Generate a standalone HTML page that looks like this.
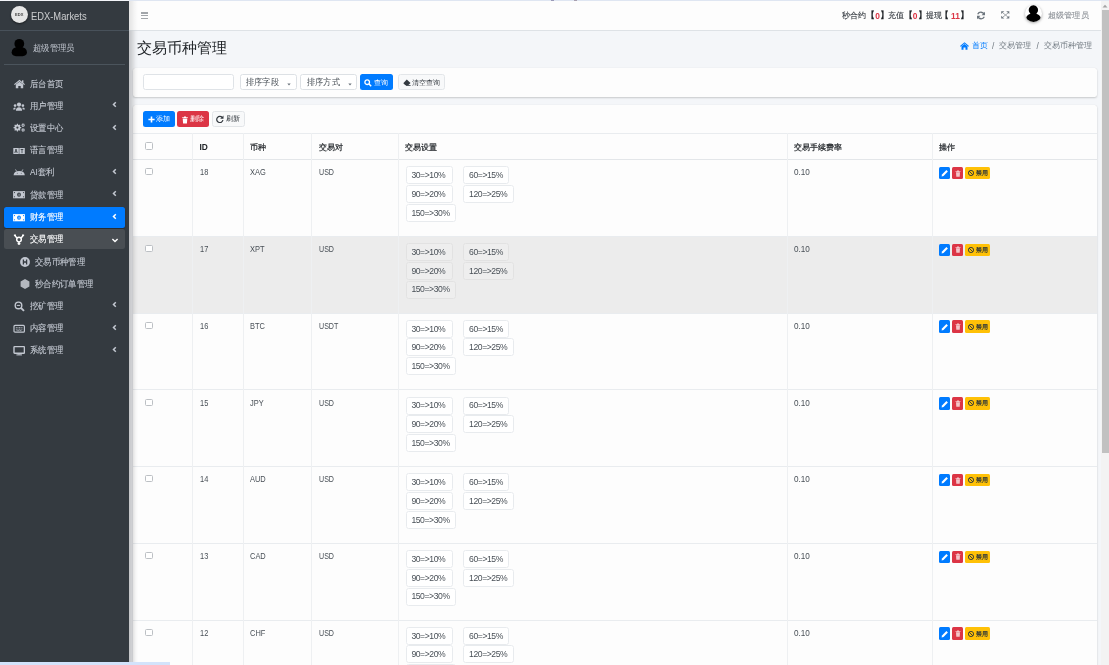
<!DOCTYPE html>
<html><head><meta charset="utf-8">
<style>
*{box-sizing:border-box;margin:0;padding:0}
html,body{width:1109px;height:665px;overflow:hidden}
body{font-family:"Liberation Sans",sans-serif;background:#f4f6f9;color:#212529;position:relative;font-size:8px}
.abs{position:absolute}
.t{position:absolute;white-space:nowrap;line-height:1}
.card{position:absolute;background:#fdfdfd;border-radius:2.5px;box-shadow:0 0 1px rgba(0,0,0,.13),0 1px 2px rgba(0,0,0,.18)}
.hl{position:absolute;height:1px;background:#e9ecef}
.vl{position:absolute;width:1px;background:#eef0f2}
.tag{position:absolute;height:18px;border:1px solid #e8ebee;border-radius:2.5px;background:#fff}
.cb{position:absolute;width:7.2px;height:7.2px;border:1px solid #bcc0c4;border-radius:1.5px;background:#fff}
</style></head><body>

<div id="root" class="abs" style="left:0;top:0;width:1109px;height:665px;will-change:transform">
<div class="abs" style="left:0;top:0;width:1109px;height:1px;background:#dfe6f2"></div>
<div class="abs" style="left:0;top:0;width:129px;height:1px;background:#f3f5f9"></div>
<div class="abs" style="left:551px;top:0;width:3px;height:1px;background:#9a9ab8"></div>
<div class="abs" style="left:574px;top:0;width:3px;height:1px;background:#a8a0b0"></div>
<div class="abs" style="left:129px;top:1px;width:972.4px;height:29.6px;background:#fdfdfd;border-bottom:1px solid #dee2e6"></div>
<div class="abs" style="left:141.2px;top:12.2px;width:7px;height:1.4px;background:#a2a6aa"></div>
<div class="abs" style="left:141.2px;top:14.9px;width:7px;height:1.4px;background:#a2a6aa"></div>
<div class="abs" style="left:141.2px;top:17.6px;width:7px;height:1.4px;background:#a2a6aa"></div>
<div class="t" style="left:842.30px;top:11.30px;font-size:8.4px;color:#343a40;-webkit-text-stroke:0.12px #343a40">秒合约</div>
<div class="t" style="left:866.00px;top:11.20px;font-size:8.6px;color:#212529;-webkit-text-stroke:0.3px #212529">【</div>
<div class="t" style="left:875.20px;top:11.60px;font-size:8.4px;color:#dc3545;font-weight:bold">0</div>
<div class="t" style="left:879.80px;top:11.20px;font-size:8.6px;color:#212529;-webkit-text-stroke:0.3px #212529">】</div>
<div class="t" style="left:903.90px;top:11.20px;font-size:8.6px;color:#212529;-webkit-text-stroke:0.3px #212529">【</div>
<div class="t" style="left:912.70px;top:11.60px;font-size:8.4px;color:#dc3545;font-weight:bold">0</div>
<div class="t" style="left:918.00px;top:11.20px;font-size:8.6px;color:#212529;-webkit-text-stroke:0.3px #212529">】</div>
<div class="t" style="left:940.00px;top:11.20px;font-size:8.6px;color:#212529;-webkit-text-stroke:0.3px #212529">【</div>
<div class="t" style="left:951.00px;top:11.60px;font-size:8.4px;color:#dc3545;font-weight:bold">11</div>
<div class="t" style="left:960.00px;top:11.20px;font-size:8.6px;color:#212529;-webkit-text-stroke:0.3px #212529">】</div>
<div class="t" style="left:888.10px;top:11.30px;font-size:8.4px;color:#343a40;-webkit-text-stroke:0.12px #343a40">充值</div>
<div class="t" style="left:926.00px;top:11.30px;font-size:8.4px;color:#343a40;-webkit-text-stroke:0.12px #343a40">提现</div>
<svg class="abs" style="left:976.0px;top:11.0px" width="10" height="9" viewBox="0 0 10 9"><path d="M8.2 3.7 A3.5 3.5 0 0 0 1.7 3.2" stroke="#6c757d" stroke-width="1.3" fill="none"/><path d="M9 0.7 V4.3 H5.5Z" fill="#6c757d"/><path d="M1.8 5.3 A3.5 3.5 0 0 0 8.3 5.8" stroke="#6c757d" stroke-width="1.3" fill="none"/><path d="M1 8.3 V4.7 H4.5Z" fill="#6c757d"/></svg>
<svg class="abs" style="left:1000.6px;top:11.3px" width="9" height="8" viewBox="0 0 9 8"><path d="M2 2 L7 6 M7 2 L2 6" stroke="#8a9096" stroke-width="0.8"/><path d="M0.2 0.2 H3.3 L0.2 3Z M8.3 0.2 H5.2 L8.3 3Z M0.2 7.6 H3.3 L0.2 4.8Z M8.3 7.6 H5.2 L8.3 4.8Z" fill="#6c757d"/></svg>
<div class="abs" style="left:1025px;top:5.3px;width:17.2px;height:17.2px;border-radius:50%;background:#fff;box-shadow:0 1px 3px rgba(0,0,0,.35);overflow:hidden"><svg width="17.2" height="17.2" viewBox="0 0 17.2 17.2"><circle cx="8.4" cy="5" r="4.7" fill="#000"/><path d="M0.9 14.6 Q1.2 8.6 8.4 8.6 Q15.6 8.6 16 14.6 Q16 17.8 8.4 17.8 Q0.9 17.8 0.9 14.6Z" fill="#000"/></svg></div>
<div class="t" style="left:1047.80px;top:11.10px;font-size:8.4px;color:#8c9197;transform:scaleX(1.02);transform-origin:0 0;-webkit-text-stroke:0.12px #8c9197">超级管理员</div>
<div class="abs" style="left:0;top:1px;width:128.6px;height:664px;background:#343a40"></div>
<div class="abs" style="left:10.8px;top:6.1px;width:17.2px;height:17.2px;border-radius:50%;background:#e6e6e6;box-shadow:0 1px 2px rgba(0,0,0,.5)"></div>
<div class="t" style="left:14.9px;top:13.2px;font-size:4px;color:#444;font-weight:bold;letter-spacing:0.1px">EDX</div>
<div class="t" style="left:31.20px;top:11.50px;font-size:10.4px;color:rgba(255,255,255,.74);transform:scaleX(0.9);transform-origin:0 0;">EDX-Markets</div>
<div class="abs" style="left:0;top:30px;width:128.6px;height:1px;background:#48515a"></div>
<svg class="abs" style="left:11px;top:38px" width="17" height="19" viewBox="0 0 17 19"><circle cx="8.3" cy="5.8" r="4.9" fill="#000"/><path d="M0.6 14.4 Q0.8 9.1 8.3 9.1 Q15.8 9.1 16 14.4 Q16 18.3 8.3 18.3 Q0.6 18.3 0.6 14.4Z" fill="#000"/></svg>
<div class="t" style="left:33.00px;top:43.90px;font-size:8.7px;color:#c2c7d0;transform:scaleX(0.93);transform-origin:0 0;">超级管理员</div>
<div class="abs" style="left:4.2px;top:64px;width:120.4px;height:1px;background:#4b545c"></div>
<svg class="abs" style="left:13.4px;top:78.3px" width="12" height="12" viewBox="0 0 12 12"><path d="M6.5 1.8 L12 6.2 L11.2 7 L6.5 3.3 L1.8 7 L1 6.2 Z" fill="#c2c7d0"/><path d="M2.8 6.6 L6.5 3.7 L10.2 6.6 V10.2 H7.7 V8 H5.3 V10.2 H2.8Z" fill="#c2c7d0"/><rect x="9" y="2.3" width="1.4" height="2.6" fill="#c2c7d0"/></svg>
<div class="t" style="left:29.70px;top:79.50px;font-size:8.8px;color:#c2c7d0;transform:scaleX(0.925);transform-origin:0 0;-webkit-text-stroke:0.12px #c2c7d0">后台首页</div>
<svg class="abs" style="left:13.4px;top:100.52px" width="12" height="12" viewBox="0 0 12 12"><circle cx="6" cy="3.6" r="2.1" fill="#c2c7d0"/><path d="M2.9 9.8 Q2.9 6.3 6 6.3 Q9.1 6.3 9.1 9.8Z" fill="#c2c7d0"/><circle cx="2.1" cy="4.6" r="1.3" fill="#c2c7d0"/><circle cx="9.9" cy="4.6" r="1.3" fill="#c2c7d0"/><path d="M0.1 8.6 Q0.1 6.4 2 6.4 Q2.7 6.4 2.5 7.6 L2.3 8.6Z" fill="#c2c7d0"/><path d="M11.9 8.6 Q11.9 6.4 10 6.4 Q9.3 6.4 9.5 7.6 L9.7 8.6Z" fill="#c2c7d0"/></svg>
<div class="t" style="left:29.70px;top:101.72px;font-size:8.8px;color:#c2c7d0;transform:scaleX(0.925);transform-origin:0 0;-webkit-text-stroke:0.12px #c2c7d0">用户管理</div>
<svg class="abs" style="left:112px;top:101.42px" width="5" height="7" viewBox="0 0 5 7"><path d="M3.8 1.2 L1.5 3.5 L3.8 5.8" stroke="#c2c7d0" stroke-width="1.5" fill="none"/></svg>
<svg class="abs" style="left:13.4px;top:122.74px" width="12" height="12" viewBox="0 0 12 12"><path d="M7.33 3.96 L8.26 4.07 L8.26 5.13 L7.33 5.24 L6.93 6.22 L7.51 6.95 L6.75 7.71 L6.02 7.13 L5.04 7.53 L4.93 8.46 L3.87 8.46 L3.76 7.53 L2.78 7.13 L2.05 7.71 L1.29 6.95 L1.87 6.22 L1.47 5.24 L0.54 5.13 L0.54 4.07 L1.47 3.96 L1.87 2.98 L1.29 2.25 L2.05 1.49 L2.78 2.07 L3.76 1.67 L3.87 0.74 L4.93 0.74 L5.04 1.67 L6.02 2.07 L6.75 1.49 L7.51 2.25 L6.93 2.98Z" fill="#c2c7d0"/><circle cx="4.4" cy="4.6" r="1.1" fill="#343a40"/><path d="M11.44 1.80 L11.97 1.85 L11.97 2.55 L11.44 2.60 L11.12 3.16 L11.33 3.64 L10.73 3.99 L10.43 3.56 L9.77 3.56 L9.47 3.99 L8.87 3.64 L9.08 3.16 L8.76 2.60 L8.23 2.55 L8.23 1.85 L8.76 1.80 L9.08 1.24 L8.87 0.76 L9.47 0.41 L9.77 0.84 L10.43 0.84 L10.73 0.41 L11.33 0.76 L11.12 1.24Z" fill="#c2c7d0"/><circle cx="10.1" cy="2.2" r="0.6" fill="#343a40"/><path d="M11.44 6.60 L11.97 6.65 L11.97 7.35 L11.44 7.40 L11.12 7.96 L11.33 8.44 L10.73 8.79 L10.43 8.36 L9.77 8.36 L9.47 8.79 L8.87 8.44 L9.08 7.96 L8.76 7.40 L8.23 7.35 L8.23 6.65 L8.76 6.60 L9.08 6.04 L8.87 5.56 L9.47 5.21 L9.77 5.64 L10.43 5.64 L10.73 5.21 L11.33 5.56 L11.12 6.04Z" fill="#c2c7d0"/><circle cx="10.1" cy="7" r="0.6" fill="#343a40"/></svg>
<div class="t" style="left:29.70px;top:123.94px;font-size:8.8px;color:#c2c7d0;transform:scaleX(0.925);transform-origin:0 0;-webkit-text-stroke:0.12px #c2c7d0">设置中心</div>
<svg class="abs" style="left:112px;top:123.64px" width="5" height="7" viewBox="0 0 5 7"><path d="M3.8 1.2 L1.5 3.5 L3.8 5.8" stroke="#c2c7d0" stroke-width="1.5" fill="none"/></svg>
<svg class="abs" style="left:13.4px;top:144.96px" width="12" height="12" viewBox="0 0 12 12"><rect x="0.3" y="3" width="5.5" height="6" fill="#c2c7d0"/><rect x="6.3" y="3" width="5.5" height="6" fill="#c2c7d0"/><path d="M1.8 8 L3 4 L4.2 8 M2.3 6.7 H3.7" stroke="#343a40" stroke-width="0.8" fill="none"/><path d="M7.7 4.5 H10.3 M9 4 V8.2" stroke="#343a40" stroke-width="0.8" fill="none"/></svg>
<div class="t" style="left:29.70px;top:146.16px;font-size:8.8px;color:#c2c7d0;transform:scaleX(0.925);transform-origin:0 0;-webkit-text-stroke:0.12px #c2c7d0">语言管理</div>
<svg class="abs" style="left:13.4px;top:167.18px" width="12" height="12" viewBox="0 0 12 12"><path d="M0.6 8.2 Q0.8 3.9 6.2 3.9 Q11.6 3.9 11.8 8.2Z" fill="#c2c7d0"/><path d="M2.5 2.4 L3.6 4.3 M9.9 2.4 L8.8 4.3" stroke="#c2c7d0" stroke-width="0.8"/><circle cx="4.2" cy="6.2" r="0.45" fill="#343a40"/><circle cx="8.2" cy="6.2" r="0.45" fill="#343a40"/></svg>
<div class="t" style="left:29.70px;top:168.38px;font-size:8.8px;color:#c2c7d0;transform:scaleX(0.925);transform-origin:0 0;-webkit-text-stroke:0.12px #c2c7d0">AI套利</div>
<svg class="abs" style="left:112px;top:168.08px" width="5" height="7" viewBox="0 0 5 7"><path d="M3.8 1.2 L1.5 3.5 L3.8 5.8" stroke="#c2c7d0" stroke-width="1.5" fill="none"/></svg>
<svg class="abs" style="left:13.4px;top:189.4px" width="12" height="12" viewBox="0 0 12 12"><rect x="0.1" y="2.1" width="11.8" height="7.2" fill="#c2c7d0"/><ellipse cx="6" cy="5.7" rx="1.9" ry="2.1" fill="#343a40"/><rect x="5.65" y="4.6" width="0.8" height="2.2" fill="#c2c7d0"/><circle cx="1.5" cy="3.6" r="0.55" fill="#343a40"/><circle cx="10.5" cy="3.6" r="0.55" fill="#343a40"/><circle cx="1.5" cy="7.8" r="0.55" fill="#343a40"/><circle cx="10.5" cy="7.8" r="0.55" fill="#343a40"/></svg>
<div class="t" style="left:29.70px;top:190.60px;font-size:8.8px;color:#c2c7d0;transform:scaleX(0.925);transform-origin:0 0;-webkit-text-stroke:0.12px #c2c7d0">贷款管理</div>
<svg class="abs" style="left:112px;top:190.3px" width="5" height="7" viewBox="0 0 5 7"><path d="M3.8 1.2 L1.5 3.5 L3.8 5.8" stroke="#c2c7d0" stroke-width="1.5" fill="none"/></svg>
<div class="abs" style="left:4.2px;top:206.72px;width:120.6px;height:21px;border-radius:2.5px;background:#007bff;box-shadow:0 1px 2px rgba(0,0,0,.3)"></div>
<svg class="abs" style="left:13.4px;top:211.62px" width="12" height="12" viewBox="0 0 12 12"><rect x="0.1" y="2.1" width="11.8" height="7.2" fill="#fff"/><ellipse cx="6" cy="5.7" rx="1.9" ry="2.1" fill="#007bff"/><rect x="5.65" y="4.6" width="0.8" height="2.2" fill="#fff"/><circle cx="1.5" cy="3.6" r="0.55" fill="#007bff"/><circle cx="10.5" cy="3.6" r="0.55" fill="#007bff"/><circle cx="1.5" cy="7.8" r="0.55" fill="#007bff"/><circle cx="10.5" cy="7.8" r="0.55" fill="#007bff"/></svg>
<div class="t" style="left:29.70px;top:212.82px;font-size:8.8px;color:#fff;transform:scaleX(0.925);transform-origin:0 0;-webkit-text-stroke:0.12px #fff">财务管理</div>
<svg class="abs" style="left:112px;top:212.52px" width="5" height="7" viewBox="0 0 5 7"><path d="M3.8 1.2 L1.5 3.5 L3.8 5.8" stroke="#fff" stroke-width="1.5" fill="none"/></svg>
<div class="abs" style="left:4.2px;top:228.94px;width:120.6px;height:20.5px;border-radius:2.5px;background:#494e53"></div>
<svg class="abs" style="left:13.4px;top:233.84px" width="12" height="12" viewBox="0 0 12 12"><path d="M1.6 1.2 L3.9 4 M10.4 1.2 L8.1 4 M0.9 1.2 H3 M9 1.2 H11.1" stroke="#fff" stroke-width="1.4"/><circle cx="6" cy="5.6" r="2.3" fill="none" stroke="#fff" stroke-width="1.5"/><path d="M6 7.8 V11 M4.6 9.6 H7.4" stroke="#fff" stroke-width="1.4"/></svg>
<div class="t" style="left:29.70px;top:235.04px;font-size:8.8px;color:#fff;transform:scaleX(0.925);transform-origin:0 0;-webkit-text-stroke:0.12px #fff">交易管理</div>
<svg class="abs" style="left:110.5px;top:237.64px" width="8" height="5" viewBox="0 0 8 5"><path d="M1.4 1.1 L4 3.6 L6.6 1.1" stroke="#fff" stroke-width="1.4" fill="none"/></svg>
<svg class="abs" style="left:18.9px;top:256.06px" width="12" height="12" viewBox="0 0 12 12"><circle cx="6" cy="6" r="4.9" fill="#c2c7d0"/><path d="M4.4 3.4 V8.6 M7.6 3.4 V8.6 M4.4 6 H7.6" stroke="#343a40" stroke-width="1.3"/></svg>
<div class="t" style="left:34.90px;top:258.06px;font-size:8.8px;color:#c2c7d0;transform:scaleX(0.925);transform-origin:0 0;-webkit-text-stroke:0.12px #c2c7d0">交易币种管理</div>
<svg class="abs" style="left:18.9px;top:278.28px" width="12" height="12" viewBox="0 0 12 12"><path d="M6 1.1 L10.4 3.5 V8.5 L6 10.9 L1.6 8.5 V3.5Z" fill="#b4b8bf"/></svg>
<div class="t" style="left:34.90px;top:280.28px;font-size:8.8px;color:#c2c7d0;transform:scaleX(0.925);transform-origin:0 0;-webkit-text-stroke:0.12px #c2c7d0">秒合约订单管理</div>
<svg class="abs" style="left:13.4px;top:300.5px" width="12" height="12" viewBox="0 0 12 12"><circle cx="5.5" cy="4.4" r="3.3" fill="none" stroke="#c2c7d0" stroke-width="1.4"/><path d="M7.9 6.8 L11 9.9" stroke="#c2c7d0" stroke-width="1.9"/><path d="M3.8 4.4 H7.2" stroke="#c2c7d0" stroke-width="1"/></svg>
<div class="t" style="left:29.70px;top:301.70px;font-size:8.8px;color:#c2c7d0;transform:scaleX(0.925);transform-origin:0 0;-webkit-text-stroke:0.12px #c2c7d0">挖矿管理</div>
<svg class="abs" style="left:112px;top:301.4px" width="5" height="7" viewBox="0 0 5 7"><path d="M3.8 1.2 L1.5 3.5 L3.8 5.8" stroke="#c2c7d0" stroke-width="1.5" fill="none"/></svg>
<svg class="abs" style="left:13.4px;top:322.72px" width="12" height="12" viewBox="0 0 12 12"><rect x="1" y="2.4" width="10.4" height="6.8" rx="1" fill="none" stroke="#c2c7d0" stroke-width="1.2"/><path d="M2.8 4.6 H9.6 M2.8 6.2 H9.6 M3.6 7.6 H8.8" stroke="#c2c7d0" stroke-width="0.8" stroke-dasharray="1.1 0.5"/></svg>
<div class="t" style="left:29.70px;top:323.92px;font-size:8.8px;color:#c2c7d0;transform:scaleX(0.925);transform-origin:0 0;-webkit-text-stroke:0.12px #c2c7d0">内容管理</div>
<svg class="abs" style="left:112px;top:323.62px" width="5" height="7" viewBox="0 0 5 7"><path d="M3.8 1.2 L1.5 3.5 L3.8 5.8" stroke="#c2c7d0" stroke-width="1.5" fill="none"/></svg>
<svg class="abs" style="left:13.4px;top:344.94px" width="12" height="12" viewBox="0 0 12 12"><rect x="1" y="1.6" width="10.4" height="6.6" rx="0.6" fill="none" stroke="#c2c7d0" stroke-width="1.4"/><path d="M5 8.2 L4.7 9.4 H7.7 L7.4 8.2Z" fill="#c2c7d0"/><path d="M3.4 9.9 H9" stroke="#c2c7d0" stroke-width="1"/></svg>
<div class="t" style="left:29.70px;top:346.14px;font-size:8.8px;color:#c2c7d0;transform:scaleX(0.925);transform-origin:0 0;-webkit-text-stroke:0.12px #c2c7d0">系统管理</div>
<svg class="abs" style="left:112px;top:345.84px" width="5" height="7" viewBox="0 0 5 7"><path d="M3.8 1.2 L1.5 3.5 L3.8 5.8" stroke="#c2c7d0" stroke-width="1.5" fill="none"/></svg>
<div class="t" style="left:136.80px;top:40.80px;font-size:14.6px;color:#212529;">交易币种管理</div>
<svg class="abs" style="left:960px;top:42px" width="9" height="8" viewBox="0 0 9 8"><path d="M4.5 0.3 L9 4 L8.3 4.7 L4.5 1.6 L0.7 4.7 L0 4 Z" fill="#007bff"/><path d="M1.5 4.2 L4.5 1.9 L7.5 4.2 V7.8 H5.5 V5.6 H3.5 V7.8 H1.5Z" fill="#007bff"/></svg>
<div class="t" style="left:971.60px;top:41.10px;font-size:8.3px;color:#007bff;">首页</div>
<div class="t" style="left:992.00px;top:41.90px;font-size:8.3px;color:#6c757d;">/</div>
<div class="t" style="left:999.40px;top:41.10px;font-size:8.3px;color:#6c757d;">交易管理</div>
<div class="t" style="left:1036.60px;top:41.90px;font-size:8.3px;color:#6c757d;">/</div>
<div class="t" style="left:1044.00px;top:41.10px;font-size:8.3px;color:#6c757d;">交易币种管理</div>
<div class="card" style="left:133px;top:68.2px;width:963.8px;height:28.5px"></div>
<div class="abs" style="left:143.2px;top:74.4px;width:90.6px;height:15.5px;border:1px solid #dfe3e7;border-radius:2.5px;background:#fff"></div>
<div class="abs" style="left:239.5px;top:74.3px;width:57px;height:15.7px;border:1px solid #dde1e5;border-radius:2.5px;background:#fff"></div>
<div class="t" style="left:246.30px;top:78.30px;font-size:8.5px;color:#495057;transform:scaleX(0.91);transform-origin:0 0;">排序字段</div>
<svg class="abs" style="left:287.4px;top:82.5px" width="5" height="3" viewBox="0 0 5 3"><path d="M0.3 0.4 H3.7 L2 2.4Z" fill="#6c757d"/></svg>
<div class="abs" style="left:300.1px;top:74.3px;width:57px;height:15.7px;border:1px solid #dde1e5;border-radius:2.5px;background:#fff"></div>
<div class="t" style="left:306.60px;top:78.30px;font-size:8.5px;color:#495057;transform:scaleX(0.91);transform-origin:0 0;">排序方式</div>
<svg class="abs" style="left:347.7px;top:82.5px" width="5" height="3" viewBox="0 0 5 3"><path d="M0.3 0.4 H3.7 L2 2.4Z" fill="#6c757d"/></svg>
<div class="abs" style="left:360.1px;top:73.9px;width:32.6px;height:16px;border-radius:2.5px;background:#007bff"></div>
<svg class="abs" style="left:364.4px;top:79.1px" width="8" height="8" viewBox="0 0 8 8"><circle cx="3.2" cy="3.2" r="2.3" fill="none" stroke="#fff" stroke-width="1.3"/><path d="M4.8 4.8 L7.2 7.2" stroke="#fff" stroke-width="1.5"/></svg>
<div class="t" style="left:373.90px;top:78.90px;font-size:7.4px;color:#fff;">查询</div>
<div class="abs" style="left:398.3px;top:74.1px;width:47.1px;height:15.7px;border-radius:2.5px;background:#f8f9fa;border:1px solid #e3e6e9"></div>
<svg class="abs" style="left:402.6px;top:79.4px" width="8" height="7" viewBox="0 0 8 7"><path d="M0.3 4.2 L3.8 0.5 L7.5 4 L5.2 6.3 H2.4Z" fill="#343a40"/><path d="M3 6.5 H7.6" stroke="#343a40" stroke-width="0.8"/></svg>
<div class="t" style="left:412.00px;top:78.90px;font-size:7.3px;color:#343a40;">清空查询</div>
<div class="card" style="left:133px;top:105px;width:963.8px;height:570px"></div>
<div class="abs" style="left:143px;top:111.2px;width:31.9px;height:15.9px;border-radius:2.5px;background:#007bff"></div>
<svg class="abs" style="left:148px;top:115.6px" width="7" height="7" viewBox="0 0 7 7"><path d="M3.5 0.4 V6.6 M0.4 3.5 H6.6" stroke="#fff" stroke-width="1.6"/></svg>
<div class="t" style="left:156.20px;top:115.30px;font-size:7.4px;color:#fff;">添加</div>
<div class="abs" style="left:177.2px;top:111.2px;width:32.3px;height:15.9px;border-radius:2.5px;background:#dc3545"></div>
<svg class="abs" style="left:182.2px;top:115.6px" width="6" height="8" viewBox="0 0 6 8"><path d="M0.2 1.2 H5.8 V2.1 H0.2Z M2 0.5 H4 V1.2 H2Z M0.7 2.4 H5.3 L4.9 7.5 H1.1Z" fill="#fff"/></svg>
<div class="t" style="left:190.00px;top:115.30px;font-size:7.4px;color:#fff;">删除</div>
<div class="abs" style="left:211.8px;top:111.2px;width:32.8px;height:15.9px;border-radius:2.5px;background:#f8f9fa;border:1px solid #e2e5e8"></div>
<svg class="abs" style="left:215.6px;top:115.2px" width="8" height="8" viewBox="0 0 8 8"><path d="M6.3 2.6 A3.1 3.1 0 1 0 6.9 5" stroke="#343a40" stroke-width="1.2" fill="none"/><path d="M7.5 0.5 V3.8 H4.2Z" fill="#343a40"/></svg>
<div class="t" style="left:225.50px;top:115.30px;font-size:7.4px;color:#343a40;">刷新</div>
<div class="hl" style="left:133px;top:133px;width:963.8px"></div>
<div class="hl" style="left:133px;top:158.8px;width:963.8px;height:1.2px;background:#e3e6e9"></div>
<div class="cb" style="left:145.4px;top:142.4px"></div>
<div class="t" style="left:199.50px;top:142.60px;font-size:8.4px;color:#212529;font-weight:bold">ID</div>
<div class="t" style="left:250.00px;top:142.80px;font-size:8.4px;color:#212529;-webkit-text-stroke:0.22px #212529">币种</div>
<div class="t" style="left:318.70px;top:142.80px;font-size:8.4px;color:#212529;-webkit-text-stroke:0.22px #212529">交易对</div>
<div class="t" style="left:405.40px;top:142.80px;font-size:8.4px;color:#212529;-webkit-text-stroke:0.22px #212529">交易设置</div>
<div class="t" style="left:794.30px;top:142.80px;font-size:8.4px;color:#212529;-webkit-text-stroke:0.22px #212529">交易手续费率</div>
<div class="t" style="left:939.00px;top:142.80px;font-size:8.4px;color:#212529;-webkit-text-stroke:0.22px #212529">操作</div>
<div class="cb" style="left:145.4px;top:168.30px"></div>
<div class="t" style="left:199.80px;top:168.40px;font-size:8.9px;color:#495057;transform:scaleX(0.84);transform-origin:0 0;">18</div>
<div class="t" style="left:249.90px;top:168.40px;font-size:8.9px;color:#495057;transform:scaleX(0.84);transform-origin:0 0;">XAG</div>
<div class="t" style="left:318.70px;top:168.40px;font-size:8.9px;color:#495057;transform:scaleX(0.8);transform-origin:0 0;">USD</div>
<div class="t" style="left:793.80px;top:168.40px;font-size:8.9px;color:#495057;transform:scaleX(0.92);transform-origin:0 0;">0.10</div>
<div class="tag" style="left:405.6px;top:166.30px;width:47.1px;background:#fff;border-color:#e8ebee"></div>
<div class="t" style="left:411.40px;top:171.20px;font-size:8.6px;color:#495057;letter-spacing:-0.42px">30=&gt;10%</div>
<div class="tag" style="left:463.3px;top:166.30px;width:46px;background:#fff;border-color:#e8ebee"></div>
<div class="t" style="left:469.10px;top:171.20px;font-size:8.6px;color:#495057;letter-spacing:-0.42px">60=&gt;15%</div>
<div class="tag" style="left:405.6px;top:184.90px;width:47.1px;background:#fff;border-color:#e8ebee"></div>
<div class="t" style="left:411.40px;top:189.80px;font-size:8.6px;color:#495057;letter-spacing:-0.42px">90=&gt;20%</div>
<div class="tag" style="left:463.3px;top:184.90px;width:50.9px;background:#fff;border-color:#e8ebee"></div>
<div class="t" style="left:469.10px;top:189.80px;font-size:8.6px;color:#495057;letter-spacing:-0.42px">120=&gt;25%</div>
<div class="tag" style="left:405.6px;top:203.80px;width:50.7px;background:#fff;border-color:#e8ebee"></div>
<div class="t" style="left:411.40px;top:208.70px;font-size:8.6px;color:#495057;letter-spacing:-0.42px">150=&gt;30%</div>
<div class="abs" style="left:938.9px;top:166.90px;width:11px;height:12.4px;border-radius:1.5px;background:#007bff"></div>
<svg class="abs" style="left:941px;top:169.3px" width="8" height="8" viewBox="0 0 8 8"><path d="M0.6 7.4 L1 5.5 L5.4 1.1 L6.9 2.6 L2.5 7Z" fill="#fff"/></svg>
<div class="abs" style="left:952.3px;top:166.90px;width:10.6px;height:12.4px;border-radius:1.5px;background:#dc3545"></div>
<svg class="abs" style="left:954.6px;top:169.7px" width="6" height="7" viewBox="0 0 6 7"><path d="M0.5 1.2 H5.5 V1.9 H0.5Z M2 0.5 H4 V1.2 H2Z M1 2.2 H5 L4.7 6.8 H1.3Z" fill="#f4c5ca"/></svg>
<div class="abs" style="left:965.1px;top:166.90px;width:25.2px;height:12.4px;border-radius:1.5px;background:#ffc107"></div>
<svg class="abs" style="left:967.1px;top:169.1px" width="8" height="8" viewBox="0 0 8 8"><circle cx="4" cy="4" r="2.6" fill="none" stroke="#1f2d3d" stroke-width="0.85"/><path d="M2.2 2.2 L5.8 5.8" stroke="#1f2d3d" stroke-width="0.85"/></svg>
<div class="t" style="left:975.90px;top:170.10px;font-size:6.3px;color:#1f2d3d;-webkit-text-stroke:0.2px #1f2d3d">禁用</div>
<div class="abs" style="left:133px;top:236.35px;width:963.8px;height:76.75px;background:#ececec"></div>
<div class="hl" style="left:133px;top:235.85px;width:963.8px"></div>
<div class="cb" style="left:145.4px;top:245.05px"></div>
<div class="t" style="left:199.80px;top:245.15px;font-size:8.9px;color:#495057;transform:scaleX(0.84);transform-origin:0 0;">17</div>
<div class="t" style="left:249.90px;top:245.15px;font-size:8.9px;color:#495057;transform:scaleX(0.84);transform-origin:0 0;">XPT</div>
<div class="t" style="left:318.70px;top:245.15px;font-size:8.9px;color:#495057;transform:scaleX(0.8);transform-origin:0 0;">USD</div>
<div class="t" style="left:793.80px;top:245.15px;font-size:8.9px;color:#495057;transform:scaleX(0.92);transform-origin:0 0;">0.10</div>
<div class="tag" style="left:405.6px;top:243.05px;width:47.1px;background:#eeeeee;border-color:#e2e2e2"></div>
<div class="t" style="left:411.40px;top:247.95px;font-size:8.6px;color:#495057;letter-spacing:-0.42px">30=&gt;10%</div>
<div class="tag" style="left:463.3px;top:243.05px;width:46px;background:#eeeeee;border-color:#e2e2e2"></div>
<div class="t" style="left:469.10px;top:247.95px;font-size:8.6px;color:#495057;letter-spacing:-0.42px">60=&gt;15%</div>
<div class="tag" style="left:405.6px;top:261.65px;width:47.1px;background:#eeeeee;border-color:#e2e2e2"></div>
<div class="t" style="left:411.40px;top:266.55px;font-size:8.6px;color:#495057;letter-spacing:-0.42px">90=&gt;20%</div>
<div class="tag" style="left:463.3px;top:261.65px;width:50.9px;background:#eeeeee;border-color:#e2e2e2"></div>
<div class="t" style="left:469.10px;top:266.55px;font-size:8.6px;color:#495057;letter-spacing:-0.42px">120=&gt;25%</div>
<div class="tag" style="left:405.6px;top:280.55px;width:50.7px;background:#eeeeee;border-color:#e2e2e2"></div>
<div class="t" style="left:411.40px;top:285.45px;font-size:8.6px;color:#495057;letter-spacing:-0.42px">150=&gt;30%</div>
<div class="abs" style="left:938.9px;top:243.65px;width:11px;height:12.4px;border-radius:1.5px;background:#007bff"></div>
<svg class="abs" style="left:941px;top:246.05px" width="8" height="8" viewBox="0 0 8 8"><path d="M0.6 7.4 L1 5.5 L5.4 1.1 L6.9 2.6 L2.5 7Z" fill="#fff"/></svg>
<div class="abs" style="left:952.3px;top:243.65px;width:10.6px;height:12.4px;border-radius:1.5px;background:#dc3545"></div>
<svg class="abs" style="left:954.6px;top:246.45px" width="6" height="7" viewBox="0 0 6 7"><path d="M0.5 1.2 H5.5 V1.9 H0.5Z M2 0.5 H4 V1.2 H2Z M1 2.2 H5 L4.7 6.8 H1.3Z" fill="#f4c5ca"/></svg>
<div class="abs" style="left:965.1px;top:243.65px;width:25.2px;height:12.4px;border-radius:1.5px;background:#ffc107"></div>
<svg class="abs" style="left:967.1px;top:245.85px" width="8" height="8" viewBox="0 0 8 8"><circle cx="4" cy="4" r="2.6" fill="none" stroke="#1f2d3d" stroke-width="0.85"/><path d="M2.2 2.2 L5.8 5.8" stroke="#1f2d3d" stroke-width="0.85"/></svg>
<div class="t" style="left:975.90px;top:246.85px;font-size:6.3px;color:#1f2d3d;-webkit-text-stroke:0.2px #1f2d3d">禁用</div>
<div class="hl" style="left:133px;top:312.60px;width:963.8px"></div>
<div class="cb" style="left:145.4px;top:321.80px"></div>
<div class="t" style="left:199.80px;top:321.90px;font-size:8.9px;color:#495057;transform:scaleX(0.84);transform-origin:0 0;">16</div>
<div class="t" style="left:249.90px;top:321.90px;font-size:8.9px;color:#495057;transform:scaleX(0.84);transform-origin:0 0;">BTC</div>
<div class="t" style="left:318.70px;top:321.90px;font-size:8.9px;color:#495057;transform:scaleX(0.8);transform-origin:0 0;">USDT</div>
<div class="t" style="left:793.80px;top:321.90px;font-size:8.9px;color:#495057;transform:scaleX(0.92);transform-origin:0 0;">0.10</div>
<div class="tag" style="left:405.6px;top:319.80px;width:47.1px;background:#fff;border-color:#e8ebee"></div>
<div class="t" style="left:411.40px;top:324.70px;font-size:8.6px;color:#495057;letter-spacing:-0.42px">30=&gt;10%</div>
<div class="tag" style="left:463.3px;top:319.80px;width:46px;background:#fff;border-color:#e8ebee"></div>
<div class="t" style="left:469.10px;top:324.70px;font-size:8.6px;color:#495057;letter-spacing:-0.42px">60=&gt;15%</div>
<div class="tag" style="left:405.6px;top:338.40px;width:47.1px;background:#fff;border-color:#e8ebee"></div>
<div class="t" style="left:411.40px;top:343.30px;font-size:8.6px;color:#495057;letter-spacing:-0.42px">90=&gt;20%</div>
<div class="tag" style="left:463.3px;top:338.40px;width:50.9px;background:#fff;border-color:#e8ebee"></div>
<div class="t" style="left:469.10px;top:343.30px;font-size:8.6px;color:#495057;letter-spacing:-0.42px">120=&gt;25%</div>
<div class="tag" style="left:405.6px;top:357.30px;width:50.7px;background:#fff;border-color:#e8ebee"></div>
<div class="t" style="left:411.40px;top:362.20px;font-size:8.6px;color:#495057;letter-spacing:-0.42px">150=&gt;30%</div>
<div class="abs" style="left:938.9px;top:320.40px;width:11px;height:12.4px;border-radius:1.5px;background:#007bff"></div>
<svg class="abs" style="left:941px;top:322.8px" width="8" height="8" viewBox="0 0 8 8"><path d="M0.6 7.4 L1 5.5 L5.4 1.1 L6.9 2.6 L2.5 7Z" fill="#fff"/></svg>
<div class="abs" style="left:952.3px;top:320.40px;width:10.6px;height:12.4px;border-radius:1.5px;background:#dc3545"></div>
<svg class="abs" style="left:954.6px;top:323.2px" width="6" height="7" viewBox="0 0 6 7"><path d="M0.5 1.2 H5.5 V1.9 H0.5Z M2 0.5 H4 V1.2 H2Z M1 2.2 H5 L4.7 6.8 H1.3Z" fill="#f4c5ca"/></svg>
<div class="abs" style="left:965.1px;top:320.40px;width:25.2px;height:12.4px;border-radius:1.5px;background:#ffc107"></div>
<svg class="abs" style="left:967.1px;top:322.6px" width="8" height="8" viewBox="0 0 8 8"><circle cx="4" cy="4" r="2.6" fill="none" stroke="#1f2d3d" stroke-width="0.85"/><path d="M2.2 2.2 L5.8 5.8" stroke="#1f2d3d" stroke-width="0.85"/></svg>
<div class="t" style="left:975.90px;top:323.60px;font-size:6.3px;color:#1f2d3d;-webkit-text-stroke:0.2px #1f2d3d">禁用</div>
<div class="hl" style="left:133px;top:389.35px;width:963.8px"></div>
<div class="cb" style="left:145.4px;top:398.55px"></div>
<div class="t" style="left:199.80px;top:398.65px;font-size:8.9px;color:#495057;transform:scaleX(0.84);transform-origin:0 0;">15</div>
<div class="t" style="left:249.90px;top:398.65px;font-size:8.9px;color:#495057;transform:scaleX(0.84);transform-origin:0 0;">JPY</div>
<div class="t" style="left:318.70px;top:398.65px;font-size:8.9px;color:#495057;transform:scaleX(0.8);transform-origin:0 0;">USD</div>
<div class="t" style="left:793.80px;top:398.65px;font-size:8.9px;color:#495057;transform:scaleX(0.92);transform-origin:0 0;">0.10</div>
<div class="tag" style="left:405.6px;top:396.55px;width:47.1px;background:#fff;border-color:#e8ebee"></div>
<div class="t" style="left:411.40px;top:401.45px;font-size:8.6px;color:#495057;letter-spacing:-0.42px">30=&gt;10%</div>
<div class="tag" style="left:463.3px;top:396.55px;width:46px;background:#fff;border-color:#e8ebee"></div>
<div class="t" style="left:469.10px;top:401.45px;font-size:8.6px;color:#495057;letter-spacing:-0.42px">60=&gt;15%</div>
<div class="tag" style="left:405.6px;top:415.15px;width:47.1px;background:#fff;border-color:#e8ebee"></div>
<div class="t" style="left:411.40px;top:420.05px;font-size:8.6px;color:#495057;letter-spacing:-0.42px">90=&gt;20%</div>
<div class="tag" style="left:463.3px;top:415.15px;width:50.9px;background:#fff;border-color:#e8ebee"></div>
<div class="t" style="left:469.10px;top:420.05px;font-size:8.6px;color:#495057;letter-spacing:-0.42px">120=&gt;25%</div>
<div class="tag" style="left:405.6px;top:434.05px;width:50.7px;background:#fff;border-color:#e8ebee"></div>
<div class="t" style="left:411.40px;top:438.95px;font-size:8.6px;color:#495057;letter-spacing:-0.42px">150=&gt;30%</div>
<div class="abs" style="left:938.9px;top:397.15px;width:11px;height:12.4px;border-radius:1.5px;background:#007bff"></div>
<svg class="abs" style="left:941px;top:399.55px" width="8" height="8" viewBox="0 0 8 8"><path d="M0.6 7.4 L1 5.5 L5.4 1.1 L6.9 2.6 L2.5 7Z" fill="#fff"/></svg>
<div class="abs" style="left:952.3px;top:397.15px;width:10.6px;height:12.4px;border-radius:1.5px;background:#dc3545"></div>
<svg class="abs" style="left:954.6px;top:399.95px" width="6" height="7" viewBox="0 0 6 7"><path d="M0.5 1.2 H5.5 V1.9 H0.5Z M2 0.5 H4 V1.2 H2Z M1 2.2 H5 L4.7 6.8 H1.3Z" fill="#f4c5ca"/></svg>
<div class="abs" style="left:965.1px;top:397.15px;width:25.2px;height:12.4px;border-radius:1.5px;background:#ffc107"></div>
<svg class="abs" style="left:967.1px;top:399.35px" width="8" height="8" viewBox="0 0 8 8"><circle cx="4" cy="4" r="2.6" fill="none" stroke="#1f2d3d" stroke-width="0.85"/><path d="M2.2 2.2 L5.8 5.8" stroke="#1f2d3d" stroke-width="0.85"/></svg>
<div class="t" style="left:975.90px;top:400.35px;font-size:6.3px;color:#1f2d3d;-webkit-text-stroke:0.2px #1f2d3d">禁用</div>
<div class="hl" style="left:133px;top:466.10px;width:963.8px"></div>
<div class="cb" style="left:145.4px;top:475.30px"></div>
<div class="t" style="left:199.80px;top:475.40px;font-size:8.9px;color:#495057;transform:scaleX(0.84);transform-origin:0 0;">14</div>
<div class="t" style="left:249.90px;top:475.40px;font-size:8.9px;color:#495057;transform:scaleX(0.84);transform-origin:0 0;">AUD</div>
<div class="t" style="left:318.70px;top:475.40px;font-size:8.9px;color:#495057;transform:scaleX(0.8);transform-origin:0 0;">USD</div>
<div class="t" style="left:793.80px;top:475.40px;font-size:8.9px;color:#495057;transform:scaleX(0.92);transform-origin:0 0;">0.10</div>
<div class="tag" style="left:405.6px;top:473.30px;width:47.1px;background:#fff;border-color:#e8ebee"></div>
<div class="t" style="left:411.40px;top:478.20px;font-size:8.6px;color:#495057;letter-spacing:-0.42px">30=&gt;10%</div>
<div class="tag" style="left:463.3px;top:473.30px;width:46px;background:#fff;border-color:#e8ebee"></div>
<div class="t" style="left:469.10px;top:478.20px;font-size:8.6px;color:#495057;letter-spacing:-0.42px">60=&gt;15%</div>
<div class="tag" style="left:405.6px;top:491.90px;width:47.1px;background:#fff;border-color:#e8ebee"></div>
<div class="t" style="left:411.40px;top:496.80px;font-size:8.6px;color:#495057;letter-spacing:-0.42px">90=&gt;20%</div>
<div class="tag" style="left:463.3px;top:491.90px;width:50.9px;background:#fff;border-color:#e8ebee"></div>
<div class="t" style="left:469.10px;top:496.80px;font-size:8.6px;color:#495057;letter-spacing:-0.42px">120=&gt;25%</div>
<div class="tag" style="left:405.6px;top:510.80px;width:50.7px;background:#fff;border-color:#e8ebee"></div>
<div class="t" style="left:411.40px;top:515.70px;font-size:8.6px;color:#495057;letter-spacing:-0.42px">150=&gt;30%</div>
<div class="abs" style="left:938.9px;top:473.90px;width:11px;height:12.4px;border-radius:1.5px;background:#007bff"></div>
<svg class="abs" style="left:941px;top:476.3px" width="8" height="8" viewBox="0 0 8 8"><path d="M0.6 7.4 L1 5.5 L5.4 1.1 L6.9 2.6 L2.5 7Z" fill="#fff"/></svg>
<div class="abs" style="left:952.3px;top:473.90px;width:10.6px;height:12.4px;border-radius:1.5px;background:#dc3545"></div>
<svg class="abs" style="left:954.6px;top:476.7px" width="6" height="7" viewBox="0 0 6 7"><path d="M0.5 1.2 H5.5 V1.9 H0.5Z M2 0.5 H4 V1.2 H2Z M1 2.2 H5 L4.7 6.8 H1.3Z" fill="#f4c5ca"/></svg>
<div class="abs" style="left:965.1px;top:473.90px;width:25.2px;height:12.4px;border-radius:1.5px;background:#ffc107"></div>
<svg class="abs" style="left:967.1px;top:476.1px" width="8" height="8" viewBox="0 0 8 8"><circle cx="4" cy="4" r="2.6" fill="none" stroke="#1f2d3d" stroke-width="0.85"/><path d="M2.2 2.2 L5.8 5.8" stroke="#1f2d3d" stroke-width="0.85"/></svg>
<div class="t" style="left:975.90px;top:477.10px;font-size:6.3px;color:#1f2d3d;-webkit-text-stroke:0.2px #1f2d3d">禁用</div>
<div class="hl" style="left:133px;top:542.85px;width:963.8px"></div>
<div class="cb" style="left:145.4px;top:552.05px"></div>
<div class="t" style="left:199.80px;top:552.15px;font-size:8.9px;color:#495057;transform:scaleX(0.84);transform-origin:0 0;">13</div>
<div class="t" style="left:249.90px;top:552.15px;font-size:8.9px;color:#495057;transform:scaleX(0.84);transform-origin:0 0;">CAD</div>
<div class="t" style="left:318.70px;top:552.15px;font-size:8.9px;color:#495057;transform:scaleX(0.8);transform-origin:0 0;">USD</div>
<div class="t" style="left:793.80px;top:552.15px;font-size:8.9px;color:#495057;transform:scaleX(0.92);transform-origin:0 0;">0.10</div>
<div class="tag" style="left:405.6px;top:550.05px;width:47.1px;background:#fff;border-color:#e8ebee"></div>
<div class="t" style="left:411.40px;top:554.95px;font-size:8.6px;color:#495057;letter-spacing:-0.42px">30=&gt;10%</div>
<div class="tag" style="left:463.3px;top:550.05px;width:46px;background:#fff;border-color:#e8ebee"></div>
<div class="t" style="left:469.10px;top:554.95px;font-size:8.6px;color:#495057;letter-spacing:-0.42px">60=&gt;15%</div>
<div class="tag" style="left:405.6px;top:568.65px;width:47.1px;background:#fff;border-color:#e8ebee"></div>
<div class="t" style="left:411.40px;top:573.55px;font-size:8.6px;color:#495057;letter-spacing:-0.42px">90=&gt;20%</div>
<div class="tag" style="left:463.3px;top:568.65px;width:50.9px;background:#fff;border-color:#e8ebee"></div>
<div class="t" style="left:469.10px;top:573.55px;font-size:8.6px;color:#495057;letter-spacing:-0.42px">120=&gt;25%</div>
<div class="tag" style="left:405.6px;top:587.55px;width:50.7px;background:#fff;border-color:#e8ebee"></div>
<div class="t" style="left:411.40px;top:592.45px;font-size:8.6px;color:#495057;letter-spacing:-0.42px">150=&gt;30%</div>
<div class="abs" style="left:938.9px;top:550.65px;width:11px;height:12.4px;border-radius:1.5px;background:#007bff"></div>
<svg class="abs" style="left:941px;top:553.05px" width="8" height="8" viewBox="0 0 8 8"><path d="M0.6 7.4 L1 5.5 L5.4 1.1 L6.9 2.6 L2.5 7Z" fill="#fff"/></svg>
<div class="abs" style="left:952.3px;top:550.65px;width:10.6px;height:12.4px;border-radius:1.5px;background:#dc3545"></div>
<svg class="abs" style="left:954.6px;top:553.45px" width="6" height="7" viewBox="0 0 6 7"><path d="M0.5 1.2 H5.5 V1.9 H0.5Z M2 0.5 H4 V1.2 H2Z M1 2.2 H5 L4.7 6.8 H1.3Z" fill="#f4c5ca"/></svg>
<div class="abs" style="left:965.1px;top:550.65px;width:25.2px;height:12.4px;border-radius:1.5px;background:#ffc107"></div>
<svg class="abs" style="left:967.1px;top:552.85px" width="8" height="8" viewBox="0 0 8 8"><circle cx="4" cy="4" r="2.6" fill="none" stroke="#1f2d3d" stroke-width="0.85"/><path d="M2.2 2.2 L5.8 5.8" stroke="#1f2d3d" stroke-width="0.85"/></svg>
<div class="t" style="left:975.90px;top:553.85px;font-size:6.3px;color:#1f2d3d;-webkit-text-stroke:0.2px #1f2d3d">禁用</div>
<div class="hl" style="left:133px;top:619.60px;width:963.8px"></div>
<div class="cb" style="left:145.4px;top:628.80px"></div>
<div class="t" style="left:199.80px;top:628.90px;font-size:8.9px;color:#495057;transform:scaleX(0.84);transform-origin:0 0;">12</div>
<div class="t" style="left:249.90px;top:628.90px;font-size:8.9px;color:#495057;transform:scaleX(0.84);transform-origin:0 0;">CHF</div>
<div class="t" style="left:318.70px;top:628.90px;font-size:8.9px;color:#495057;transform:scaleX(0.8);transform-origin:0 0;">USD</div>
<div class="t" style="left:793.80px;top:628.90px;font-size:8.9px;color:#495057;transform:scaleX(0.92);transform-origin:0 0;">0.10</div>
<div class="tag" style="left:405.6px;top:626.80px;width:47.1px;background:#fff;border-color:#e8ebee"></div>
<div class="t" style="left:411.40px;top:631.70px;font-size:8.6px;color:#495057;letter-spacing:-0.42px">30=&gt;10%</div>
<div class="tag" style="left:463.3px;top:626.80px;width:46px;background:#fff;border-color:#e8ebee"></div>
<div class="t" style="left:469.10px;top:631.70px;font-size:8.6px;color:#495057;letter-spacing:-0.42px">60=&gt;15%</div>
<div class="tag" style="left:405.6px;top:645.40px;width:47.1px;background:#fff;border-color:#e8ebee"></div>
<div class="t" style="left:411.40px;top:650.30px;font-size:8.6px;color:#495057;letter-spacing:-0.42px">90=&gt;20%</div>
<div class="tag" style="left:463.3px;top:645.40px;width:50.9px;background:#fff;border-color:#e8ebee"></div>
<div class="t" style="left:469.10px;top:650.30px;font-size:8.6px;color:#495057;letter-spacing:-0.42px">120=&gt;25%</div>
<div class="tag" style="left:405.6px;top:664.30px;width:50.7px;background:#fff;border-color:#e8ebee"></div>
<div class="t" style="left:411.40px;top:669.20px;font-size:8.6px;color:#495057;letter-spacing:-0.42px">150=&gt;30%</div>
<div class="abs" style="left:938.9px;top:627.40px;width:11px;height:12.4px;border-radius:1.5px;background:#007bff"></div>
<svg class="abs" style="left:941px;top:629.8px" width="8" height="8" viewBox="0 0 8 8"><path d="M0.6 7.4 L1 5.5 L5.4 1.1 L6.9 2.6 L2.5 7Z" fill="#fff"/></svg>
<div class="abs" style="left:952.3px;top:627.40px;width:10.6px;height:12.4px;border-radius:1.5px;background:#dc3545"></div>
<svg class="abs" style="left:954.6px;top:630.2px" width="6" height="7" viewBox="0 0 6 7"><path d="M0.5 1.2 H5.5 V1.9 H0.5Z M2 0.5 H4 V1.2 H2Z M1 2.2 H5 L4.7 6.8 H1.3Z" fill="#f4c5ca"/></svg>
<div class="abs" style="left:965.1px;top:627.40px;width:25.2px;height:12.4px;border-radius:1.5px;background:#ffc107"></div>
<svg class="abs" style="left:967.1px;top:629.6px" width="8" height="8" viewBox="0 0 8 8"><circle cx="4" cy="4" r="2.6" fill="none" stroke="#1f2d3d" stroke-width="0.85"/><path d="M2.2 2.2 L5.8 5.8" stroke="#1f2d3d" stroke-width="0.85"/></svg>
<div class="t" style="left:975.90px;top:630.60px;font-size:6.3px;color:#1f2d3d;-webkit-text-stroke:0.2px #1f2d3d">禁用</div>
<div class="vl" style="left:192px;top:133px;height:540px"></div>
<div class="vl" style="left:243px;top:133px;height:540px"></div>
<div class="vl" style="left:311px;top:133px;height:540px"></div>
<div class="vl" style="left:398px;top:133px;height:540px"></div>
<div class="vl" style="left:787px;top:133px;height:540px"></div>
<div class="vl" style="left:932px;top:133px;height:540px"></div>
<div class="abs" style="left:128.6px;top:1px;width:9px;height:30px;background:linear-gradient(to right,rgba(0,0,0,.1) 0%,rgba(0,0,0,.07) 30%,rgba(0,0,0,.03) 60%,rgba(0,0,0,0) 100%)"></div>
<div class="abs" style="left:128.6px;top:31px;width:9px;height:634px;background:linear-gradient(to right,rgba(0,0,0,.2) 0%,rgba(0,0,0,.15) 27%,rgba(0,0,0,.09) 50%,rgba(0,0,0,.035) 72%,rgba(0,0,0,0) 100%)"></div>
<div class="abs" style="left:1101.4px;top:1px;width:7.6px;height:664px;background:#f3f3f3"></div>
<div class="abs" style="left:1102.1px;top:10px;width:6.9px;height:442.9px;background:#c1c1c1"></div>
<svg class="abs" style="left:1102.2px;top:4px" width="6" height="4" viewBox="0 0 6 4"><path d="M0.5 3.5 L3 0.8 L5.5 3.5Z" fill="#a3a3a3"/></svg>
<div class="abs" style="left:0;top:661.9px;width:170px;height:3.1px;background:#d3e3fb"></div>
</div></body></html>
